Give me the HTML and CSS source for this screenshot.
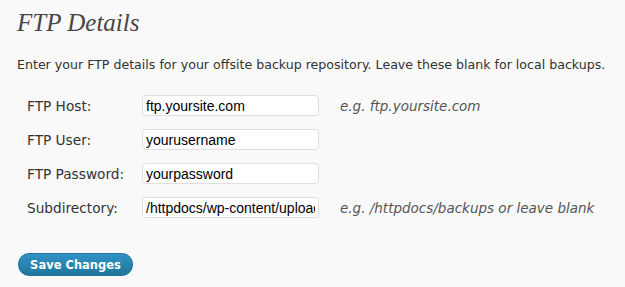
FILE: index.html
```html
<!DOCTYPE html>
<html lang="en">
  <head>
    <meta charset="UTF-8" />
    <title>FTP Details</title>
    <link rel="stylesheet" href="styles.css">
  </head>
  <body>
    <div class="wrap">
      <h2>FTP Details</h2>
      <p class="intro">Enter your FTP details for your offsite backup repository. Leave these blank for local backups.</p>

      <form>
        <table class="form-table">
          <tr>
            <th><label for="ftp-host">FTP Host:</label></th>
            <td><input type="text" id="ftp-host" value="ftp.yoursite.com" /></td>
            <td class="hint">e.g. ftp.yoursite.com</td>
          </tr>
          <tr>
            <th><label for="ftp-user">FTP User:</label></th>
            <td><input type="text" id="ftp-user" value="yourusername" /></td>
            <td class="hint"></td>
          </tr>
          <tr>
            <th><label for="ftp-pass">FTP Password:</label></th>
            <td><input type="text" id="ftp-pass" value="yourpassword" /></td>
            <td class="hint"></td>
          </tr>
          <tr>
            <th><label for="ftp-dir">Subdirectory:</label></th>
            <td><input type="text" id="ftp-dir" value="/httpdocs/wp-content/uploads" /></td>
            <td class="hint">e.g. /httpdocs/backups or leave blank</td>
          </tr>
        </table>

        <button class="button-primary" type="submit">Save Changes</button>
      </form>
    </div>
  </body>
</html>
```

FILE: styles.css
```css
body {
  margin: 0;
  background: #f9f9f9;
  color: #333;
  font-family: "DejaVu Sans", Verdana, sans-serif;
  font-size: 12.6px;
}
.wrap {
  padding: 0 0 0 17px;
}
h2 {
  margin: 0;
  padding-top: 6px;
  font-family: "Liberation Serif", Georgia, serif;
  font-style: italic;
  font-weight: normal;
  font-size: 25px;
  color: #464646;
  line-height: 34px;
}
.intro {
  margin: 17px 0 22px;
  line-height: 16px;
}
.form-table {
  border-collapse: collapse;
}
.form-table th {
  text-align: left;
  font-weight: normal;
  font-size: 13.7px;
  padding: 0 10px 13px 10px;
  width: 105px;
  height: 21px;
  color: #333;
}
.form-table td {
  padding: 0 0 13px 0;
  vertical-align: middle;
}
.form-table input {
  box-sizing: border-box;
  width: 177px;
  height: 21px;
  border: 1px solid #dfdfdf;
  border-radius: 4px;
  background: #fff;
  padding: 0 3px;
  font-family: "Liberation Sans", Arial, sans-serif;
  font-size: 14px;
  color: #000;
}
.form-table .hint {
  padding-left: 21px;
  font-style: italic;
  font-size: 13.5px;
  color: #555;
}
.button-primary {
  margin: 22px 0 0 1px;
  width: 115px;
  height: 23px;
  border: 1px solid #21759b;
  border-radius: 11px;
  background: linear-gradient(#3192c7, #21759b);
  color: #fff;
  font-family: "DejaVu Sans", Verdana, sans-serif;
  font-weight: bold;
  font-size: 11.5px;
  padding: 0;
  cursor: pointer;
}
```
